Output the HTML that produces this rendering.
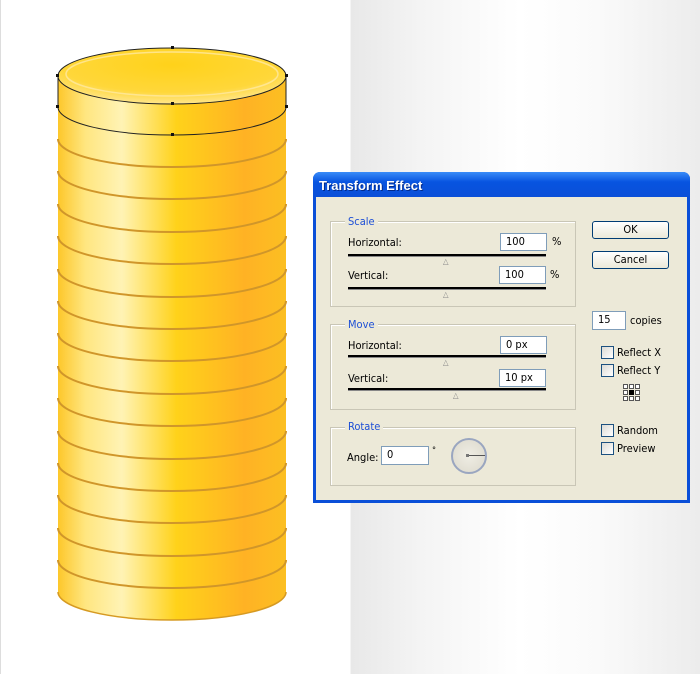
<!DOCTYPE html><html><head><style>
body{margin:0;width:700px;height:674px;overflow:hidden;position:relative;font-family:Tahoma,"DejaVu Sans Condensed","Liberation Sans",sans-serif;font-size:11px;background:linear-gradient(90deg,#fff 0,#fff 350px,#e8e8e8 351px,#f4f4f4 420px,#fff 520px,#fafafa 600px,#ececec 700px)}
.a{position:absolute}
.dlg{left:313px;top:172px;width:377px;height:331px;background:#0a4fd8;border-radius:7px 7px 0 0}
.tb{left:0;top:0;width:377px;height:25px;border-radius:7px 7px 0 0;background:linear-gradient(#3a8cf8,#0854e0 40%,#0a4fd8);color:#fff;font-weight:bold;font-size:13px;line-height:27px;text-indent:6px;text-shadow:1px 1px #022a8a;font-family:"Liberation Sans",sans-serif}
.bd{left:3px;top:25px;width:371px;height:303px;background:#ece9d8}
.g{border:1px solid #c9c6b6;box-shadow:inset 1px 1px #fff}
.lg{background:#ece9d8;color:#1d4fd6;font-size:11px;padding:0 3px}
.in{background:#fff;border:1px solid #7f9db9;font-size:11px;line-height:16px;padding-left:5px;box-sizing:border-box}
.sl{height:2px;background:#000;border-bottom:1px solid #888}
.btn{border:1px solid #003c74;border-radius:3px;background:linear-gradient(#fff,#ece9d8);text-align:center;font-size:11px;line-height:16px;box-sizing:border-box}
.cb{width:13px;height:13px;border:1px solid #1c5180;background:linear-gradient(135deg,#dcdbd5,#fff);box-sizing:border-box}
.t{font-size:11px}
</style></head><body>
<div class="a" style="left:0;top:0;width:1px;height:674px;background:#ddd"></div>
<svg class="a" style="left:0;top:0" width="350" height="674">
<defs>
<linearGradient id="s" x1="0" x2="1"><stop offset="0" stop-color="#fdc72a"/><stop offset=".12" stop-color="#ffe680"/><stop offset=".28" stop-color="#fff3b5"/><stop offset=".52" stop-color="#ffd21a"/><stop offset=".82" stop-color="#ffb224"/><stop offset="1" stop-color="#fcbf22"/></linearGradient>
<radialGradient id="tp" cx=".5" cy=".3" r=".7"><stop offset="0" stop-color="#ffd21a"/><stop offset=".7" stop-color="#ffd73a"/><stop offset="1" stop-color="#ffe68c"/></radialGradient>
</defs>
<path d="M58 76 L58 592 A114 28 0 0 0 286 592 L286 76 Z" fill="url(#s)"/>
<path d="M58 592 A114 28 0 0 0 286 592" fill="none" stroke="#d69a22" stroke-width="1.5"/>
<g fill="none" stroke="#d0962a" stroke-width="2">
<path d="M58 139 A114 28 0 0 0 286 139"/><path d="M58 171 A114 28 0 0 0 286 171"/><path d="M58 204 A114 28 0 0 0 286 204"/><path d="M58 236 A114 28 0 0 0 286 236"/><path d="M58 269 A114 28 0 0 0 286 269"/><path d="M58 301 A114 28 0 0 0 286 301"/><path d="M58 333 A114 28 0 0 0 286 333"/><path d="M58 366 A114 28 0 0 0 286 366"/><path d="M58 398 A114 28 0 0 0 286 398"/><path d="M58 431 A114 28 0 0 0 286 431"/><path d="M58 463 A114 28 0 0 0 286 463"/><path d="M58 495 A114 28 0 0 0 286 495"/><path d="M58 528 A114 28 0 0 0 286 528"/><path d="M58 560 A114 28 0 0 0 286 560"/>
</g>
<path d="M58 76 L58 107 A114 28 0 0 0 286 107 L286 76" fill="none" stroke="#222" stroke-width="1"/>
<ellipse cx="172" cy="76" rx="114" ry="28" fill="url(#tp)" stroke="#222" stroke-width="1"/>
<ellipse cx="172" cy="74" rx="106" ry="22" fill="none" stroke="#ffe9a0" stroke-width="1.5" opacity=".8"/>
<g fill="#111"><rect x="171" y="46" width="3" height="3"/><rect x="56" y="74" width="3" height="3"/><rect x="285" y="74" width="3" height="3"/><rect x="171" y="102" width="3" height="3"/><rect x="56" y="105" width="3" height="3"/><rect x="285" y="105" width="3" height="3"/><rect x="171" y="133" width="3" height="3"/></g>
</svg>
<div class="a dlg">
<div class="a tb">Transform Effect</div>
<div class="a bd">
<div class="a g" style="left:14px;top:24px;width:244px;height:84px"></div>
<div class="a lg" style="left:29px;top:18px">Scale</div>
<div class="a t" style="left:32px;top:39px">Horizontal:</div>
<div class="a in" style="left:184px;top:36px;width:47px;height:18px">100</div><div class="a t" style="left:236px;top:38px">%</div>
<div class="a sl" style="left:32px;top:57px;width:198px"></div><div class="a" style="left:127px;top:60px;color:#888;font-size:8px">△</div>
<div class="a t" style="left:32px;top:72px">Vertical:</div>
<div class="a in" style="left:183px;top:69px;width:47px;height:18px">100</div><div class="a t" style="left:234px;top:71px">%</div>
<div class="a sl" style="left:32px;top:90px;width:198px"></div><div class="a" style="left:127px;top:93px;color:#888;font-size:8px">△</div>

<div class="a g" style="left:14px;top:127px;width:244px;height:84px"></div>
<div class="a lg" style="left:29px;top:121px">Move</div>
<div class="a t" style="left:32px;top:142px">Horizontal:</div>
<div class="a in" style="left:184px;top:139px;width:47px;height:18px">0 px</div>
<div class="a sl" style="left:32px;top:158px;width:198px"></div><div class="a" style="left:127px;top:161px;color:#888;font-size:8px">△</div>
<div class="a t" style="left:32px;top:175px">Vertical:</div>
<div class="a in" style="left:183px;top:172px;width:47px;height:18px">10 px</div>
<div class="a sl" style="left:32px;top:191px;width:198px"></div><div class="a" style="left:137px;top:194px;color:#888;font-size:8px">△</div>

<div class="a g" style="left:14px;top:230px;width:244px;height:57px"></div>
<div class="a lg" style="left:29px;top:223px">Rotate</div>
<div class="a t" style="left:31px;top:254px">Angle:</div>
<div class="a in" style="left:65px;top:249px;width:48px;height:19px">0</div><div class="a" style="left:116px;top:249px;font-size:9px">°</div>
<div class="a" style="left:135px;top:241px;width:32px;height:32px;border:2px solid #9aa6c0;border-radius:50%;background:radial-gradient(#efede4,#dcd9cc)"></div>
<div class="a" style="left:152px;top:258px;width:17px;height:1px;background:#555"></div>
<div class="a" style="left:150px;top:257px;width:3px;height:3px;background:#777"></div>

<div class="a btn" style="left:276px;top:24px;width:77px;height:18px">OK</div>
<div class="a btn" style="left:276px;top:54px;width:77px;height:18px">Cancel</div>
<div class="a in" style="left:276px;top:114px;width:34px;height:19px">15</div>
<div class="a t" style="left:314px;top:117px">copies</div>
<div class="a cb" style="left:285px;top:149px"></div><div class="a t" style="left:301px;top:149px">Reflect X</div>
<div class="a cb" style="left:285px;top:167px"></div><div class="a t" style="left:301px;top:167px">Reflect Y</div>
<svg class="a" style="left:306px;top:186px" width="20" height="20"><g fill="#fff" stroke="#555" stroke-width="1"><rect x="1.5" y="1.5" width="4" height="4"/><rect x="7.5" y="1.5" width="4" height="4"/><rect x="13.5" y="1.5" width="4" height="4"/><rect x="1.5" y="7.5" width="4" height="4"/><rect x="13.5" y="7.5" width="4" height="4"/><rect x="1.5" y="13.5" width="4" height="4"/><rect x="7.5" y="13.5" width="4" height="4"/><rect x="13.5" y="13.5" width="4" height="4"/></g><rect x="7" y="7" width="5" height="5" fill="#000"/></svg>
<div class="a cb" style="left:285px;top:227px"></div><div class="a t" style="left:301px;top:227px">Random</div>
<div class="a cb" style="left:285px;top:245px"></div><div class="a t" style="left:301px;top:245px">Preview</div>
</div></div>
</body></html>
